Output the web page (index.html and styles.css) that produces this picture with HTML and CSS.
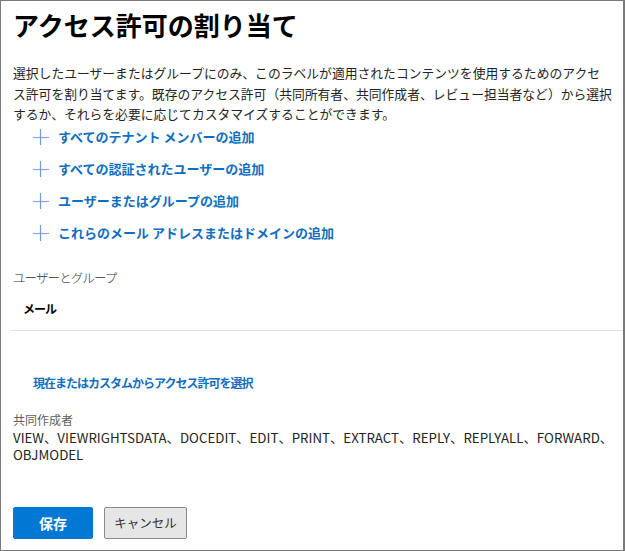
FILE: index.html
```html
<!DOCTYPE html>
<html lang="ja">
<head>
<meta charset="utf-8">
<title>アクセス許可の割り当て</title>
<link rel="stylesheet" href="styles.css">
</head>
<body>
<div class="panel">
  <h1 class="title">アクセス許可の割り当て</h1>
  <p class="intro">選択したユーザーまたはグループにのみ、このラベルが適用されたコンテンツを使用するためのアクセ<br>ス許可を割り当てます。既存のアクセス許可（共同所有者、共同作成者、レビュー担当者など）から選択<br>するか、それらを必要に応じてカスタマイズすることができます。</p>
  <ul class="add-list">
    <li class="add-item"><svg class="plus" width="16" height="16" viewBox="0 0 16 16"><path d="M0 8.5H16" stroke="#949fe0" stroke-width="1.2" fill="none"/><path d="M7.5 0V16" stroke="#6f9be6" stroke-width="1.2" fill="none"/></svg><span>すべてのテナント メンバーの追加</span></li>
    <li class="add-item"><svg class="plus" width="16" height="16" viewBox="0 0 16 16"><path d="M0 8.5H16" stroke="#949fe0" stroke-width="1.2" fill="none"/><path d="M7.5 0V16" stroke="#6f9be6" stroke-width="1.2" fill="none"/></svg><span>すべての認証されたユーザーの追加</span></li>
    <li class="add-item"><svg class="plus" width="16" height="16" viewBox="0 0 16 16"><path d="M0 8.5H16" stroke="#949fe0" stroke-width="1.2" fill="none"/><path d="M7.5 0V16" stroke="#6f9be6" stroke-width="1.2" fill="none"/></svg><span>ユーザーまたはグループの追加</span></li>
    <li class="add-item"><svg class="plus" width="16" height="16" viewBox="0 0 16 16"><path d="M0 8.5H16" stroke="#949fe0" stroke-width="1.2" fill="none"/><path d="M7.5 0V16" stroke="#6f9be6" stroke-width="1.2" fill="none"/></svg><span>これらのメール アドレスまたはドメインの追加</span></li>
  </ul>
  <div class="section-label">ユーザーとグループ</div>
  <div class="col-head">メール</div>
  <div class="divider"></div>
  <div class="choose-link">現在またはカスタムからアクセス許可を選択</div>
  <div class="perm-label">共同作成者</div>
  <div class="perm-values">VIEW、VIEWRIGHTSDATA、DOCEDIT、EDIT、PRINT、EXTRACT、REPLY、REPLYALL、FORWARD、OBJMODEL</div>
  <div class="actions">
    <button class="btn btn-primary">保存</button>
    <button class="btn btn-secondary">キャンセル</button>
  </div>
</div>
</body>
</html>
```
FILE: styles.css
```css
html, body {
  margin: 0;
  padding: 0;
  background: #fff;
}
body {
  font-family: "Noto Sans CJK JP", "Noto Sans", sans-serif;
  color: #252423;
}
.panel {
  box-sizing: border-box;
  width: 625px;
  height: 551px;
  border: 1px solid #7a7a7a;
  border-right-width: 2px;
  padding: 8px 0 0 12px;
  overflow: hidden;
}
.title {
  margin: 0;
  font-size: 26px;
  font-weight: 700;
  line-height: 32px;
  color: #000;
}
.intro {
  margin: 22px 0 0 0;
  font-size: 12.8px;
  line-height: 20.5px;
  white-space: nowrap;
  color: #252423;
}
.add-list {
  list-style: none;
  margin: 0;
  padding: 0 0 0 20px;
  display: flex;
  flex-direction: column;
  gap: 8px;
}
.add-item {
  height: 24px;
  display: flex;
  align-items: center;
  gap: 9px;
  font-size: 13px;
  font-weight: 700;
  color: #106ebe;
}
.plus {
  flex: none;
}
.section-label {
  margin-top: 23px;
  font-size: 12.5px;
  line-height: 20px;
  font-weight: 300;
  letter-spacing: -0.9px;
  color: #323130;
}
.col-head {
  margin-top: 11px;
  padding-left: 10px;
  font-size: 12px;
  line-height: 20px;
  font-weight: 700;
  letter-spacing: -1px;
  color: #000;
}
.divider {
  margin: 11px 0 0 -2px;
  height: 1px;
  background: #e1e1e1;
}
.choose-link {
  margin-top: 42px;
  padding-left: 20px;
  font-size: 12px;
  line-height: 20px;
  font-weight: 700;
  letter-spacing: -1px;
  color: #106ebe;
}
.perm-label {
  margin-top: 18px;
  font-size: 12px;
  line-height: 18px;
  color: #605e5c;
}
.perm-values {
  font-size: 13.3px;
  line-height: 17px;
  color: #252423;
}
.actions {
  margin-top: 44px;
  display: flex;
  gap: 11px;
}
.btn {
  box-sizing: border-box;
  height: 32px;
  border-radius: 2px;
  font-family: "Noto Sans CJK JP", "Noto Sans", sans-serif;
  padding: 0;
  cursor: pointer;
}
.btn-primary {
  width: 80px;
  background: #0078d4;
  border: 1px solid #0078d4;
  color: #fff;
  font-size: 14px;
  font-weight: 700;
}
.btn-secondary {
  width: 83px;
  background: #e6e6e6;
  border: 1px solid #8a8a8a;
  color: #323130;
  font-size: 12.5px;
  font-weight: 400;
}
```
